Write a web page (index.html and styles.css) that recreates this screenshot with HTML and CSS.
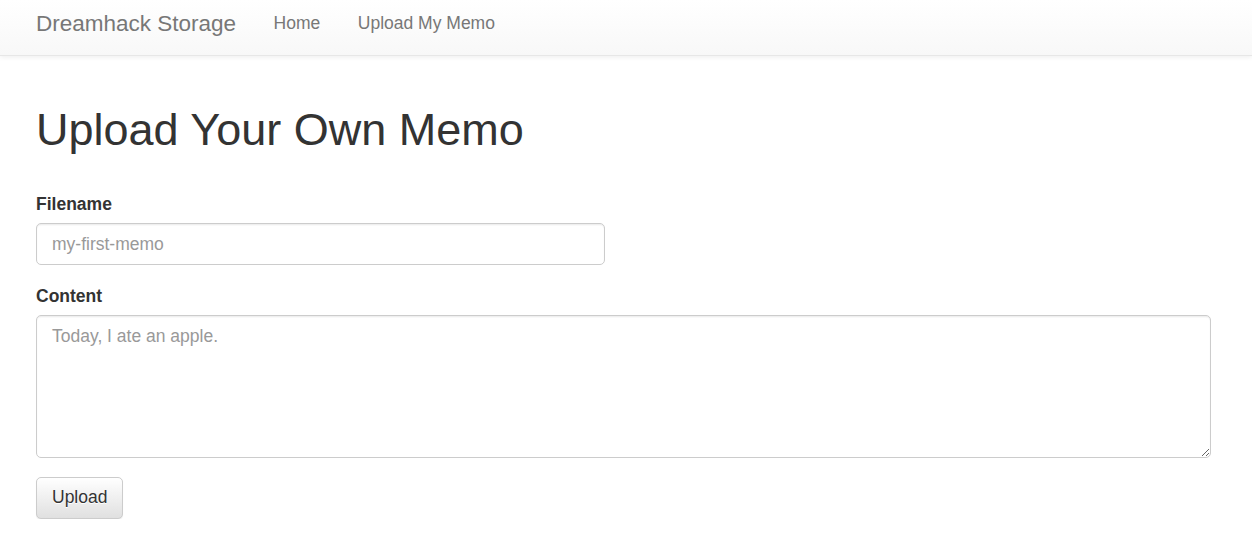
FILE: index.html
```html
<!DOCTYPE html>
<html lang="en">
<head>
<meta charset="utf-8">
<title>Dreamhack Storage</title>
<link rel="stylesheet" href="styles.css">
</head>
<body>
<nav class="navbar">
  <div class="navbar-inner">
    <a class="brand" href="#">Dreamhack Storage</a>
    <ul class="nav">
      <li><a href="#">Home</a></li>
      <li><a href="#">Upload My Memo</a></li>
    </ul>
  </div>
</nav>
<main class="container">
  <h1 class="title">Upload Your Own Memo</h1>
  <form class="memo-form">
    <div class="form-group">
      <label class="label" for="filename">Filename</label>
      <input class="form-control input-short" id="filename" type="text" placeholder="my-first-memo">
    </div>
    <div class="form-group">
      <label class="label" for="content">Content</label>
      <textarea class="form-control textarea" id="content" rows="5" placeholder="Today, I ate an apple."></textarea>
    </div>
    <button class="btn" type="button">Upload</button>
  </form>
</main>
</body>
</html>
```

FILE: styles.css
```css
* { box-sizing: border-box; }
html, body { margin: 0; padding: 0; }
body {
  font-family: "Liberation Sans", Arial, Helvetica, sans-serif;
  font-size: 17.5px;
  line-height: 25px;
  color: #333;
  background: #fff;
}
.navbar {
  height: 56px;
  background-image: linear-gradient(to bottom, #fff 0, #f8f8f8 100%);
  border-bottom: 1px solid #e7e7e7;
  box-shadow: inset 0 1px 0 rgba(255,255,255,.15), 0 1px 5px rgba(0,0,0,.075);
}
.navbar-inner {
  display: flex;
  align-items: flex-start;
  padding-left: 17.25px;
}
.brand {
  font-size: 22.5px;
  line-height: 25px;
  padding: 11px 18.75px 0;
  color: #777;
  text-decoration: none;
}
.nav {
  display: flex;
  list-style: none;
  margin: 0;
  padding: 0;
}
.nav a {
  display: block;
  padding: 10.5px 18.75px 0;
  line-height: 25px;
  color: #777;
  text-decoration: none;
}
.container {
  padding: 0 41px 0 36px;
}
.title {
  font-size: 45px;
  font-weight: 500;
  line-height: 49.5px;
  margin: 49px 0 37px;
  color: #333;
}
.form-group {
  margin-bottom: 18.75px;
}
.label {
  display: block;
  font-weight: bold;
  margin-bottom: 6.25px;
  max-width: 100%;
}
.form-control {
  display: block;
  width: 100%;
  height: 42.5px;
  padding: 7.5px 15px;
  font-family: inherit;
  font-size: 17.5px;
  line-height: 25px;
  color: #555;
  background: #fff;
  border: 1.25px solid #ccc;
  border-radius: 5px;
  box-shadow: inset 0 1.25px 1.25px rgba(0,0,0,.075);
  margin: 0;
}
.form-control::placeholder { color: #999; opacity: 1; }
.input-short { width: 569px; }
.textarea {
  height: 142.5px;
  resize: vertical;
}
.btn {
  display: inline-block;
  height: 42.5px;
  padding: 7.5px 15px;
  font-family: inherit;
  font-size: 17.5px;
  line-height: 25px;
  color: #333;
  text-shadow: 0 1px 0 #fff;
  background-image: linear-gradient(to bottom, #fff 0, #e0e0e0 100%);
  border: 1.25px solid #ccc;
  border-radius: 5px;
  box-shadow: inset 0 1px 0 rgba(255,255,255,.15), 0 1px 1px rgba(0,0,0,.075);
  cursor: pointer;
}
```
